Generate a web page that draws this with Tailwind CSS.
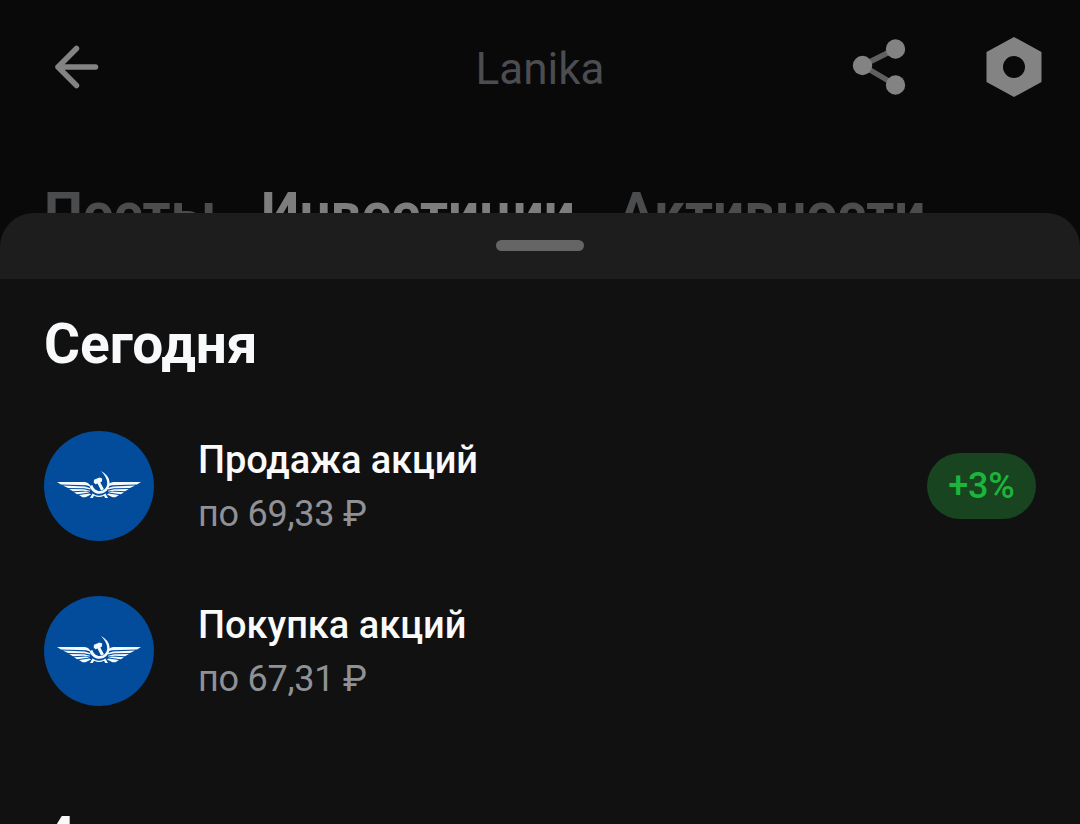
<!DOCTYPE html>
<html lang="ru">
<head>
  <meta charset="UTF-8" />
  <meta name="viewport" content="width=device-width, initial-scale=1.0" />
  <title>Lanika</title>
  <script src="https://cdn.jsdelivr.net/npm/@tailwindcss/browser@4"></script>
</head>
<body class="bg-[#090909] font-['Roboto',sans-serif] text-white">
  <div class="relative h-[824px] w-full overflow-hidden">
    <!-- Header -->
    <header class="grid h-[134px] grid-cols-3 items-center px-[36px]">
      <svg class="ml-[18px] h-[46px] w-[46px]" viewBox="0 0 46 46" fill="none" stroke="#838383" stroke-width="5.500" stroke-linecap="round" stroke-linejoin="round">
        <path d="M41.500 23H4M22.500 4.500L4 23L22.500 41.500" />
      </svg>
      <h1 class="pt-[4px] text-center text-[44px] leading-[52px] text-[#4b4d50]">Lanika</h1>
      <div class="flex items-center justify-end gap-[78px]">
        <svg class="h-[58px] w-[56px]" viewBox="0 0 56 58">
          <path d="M45.500 11L12.500 27.500L45.500 47" fill="none" stroke="#606060" stroke-width="5.500" />
          <g fill="#838383">
            <circle cx="45.500" cy="11" r="9.700" />
            <circle cx="12.500" cy="27.500" r="9.700" />
            <circle cx="45.500" cy="47" r="9.700" />
          </g>
        </svg>
        <svg class="h-[60px] w-[60px]" viewBox="0 0 60 60">
          <path fill="#838383" fill-rule="evenodd" d="M30 0L57.500 15V45L30 60L2.500 45V15ZM30 19a11 11 0 1 0 0 22a11 11 0 1 0 0-22Z" />
        </svg>
      </div>
    </header>

    <!-- Tabs -->
    <nav class="flex pt-[46px] pl-[44px] text-[55px] leading-[66px] font-bold text-[#4a4c4e]">
      <a class="w-[217px]">Посты</a>
      <a class="w-[357px] text-[#7d7d7d]">Инвестиции</a>
      <a>Активности</a>
    </nav>

    <!-- Bottom sheet -->
    <section class="absolute inset-x-0 top-[213px] bottom-0 overflow-hidden rounded-t-[34px] bg-[#111111]">
      <div class="flex h-[66px] justify-center bg-[#1d1d1e] pt-[27px]">
        <div class="h-[11px] w-[88px] rounded-full bg-[#656565]"></div>
      </div>

      <div class="px-[44px] pt-[33px]">
        <h2 class="text-[55px] leading-[64px] font-bold text-[#f8f9fa]">Сегодня</h2>

        <div class="mt-[55px] flex h-[110px] items-center">
          <svg class="h-[110px] w-[110px] shrink-0" viewBox="0 0 110 110">
            <circle cx="55" cy="55" r="55" fill="#034b9b" />
            <g id="emblem" fill="#f3faff">
              <g id="wing">
                <path d="M13 51H41Q44.500 51.500 46 54L46.500 55.500L42 54.200L17 53.400Z" />
                <path d="M19 54.500L41 55.500L46.500 57.300V58.500L40 57.200L24 57Z" />
                <path d="M25 58L40 58.200L46 59.700V60.600L39 59.800L29 60.300Z" />
                <path d="M30 61.200L42 60.600L45.500 61.600L37 62.800L33 63.200Z" />
                <path d="M35 64L45.500 62.400L47 63.600L41.500 66.300H38.500Z" />
              </g>
              <use href="#wing" transform="matrix(-1 0 0 1 110 0)" />
              <path d="M57 40Q65.700 44.500 65.700 52C65.700 58 61 62.800 55.500 62.800C50.500 62.800 46.800 59.500 45.600 55L48.300 54C49.500 57.800 52.500 60 55.500 60C60 60 63.200 56.500 63.200 52Q63.200 46.500 57 40Z" />
              <path d="M50 48.800L55.500 46.500L58.200 47.600L57.900 50.500L56.300 51.500L60 58.300L57 59.500L53.500 52.500L51.500 53.200L49.700 51.500Z" />
              <path d="M48.500 62.500Q55 67 61.500 62.500L64 67H61.200L60 64.800Q55 67.200 50 64.800L48.800 67H46Z" />
            </g>
          </svg>
          <div class="ml-[44px] grow pt-[2px]">
            <div class="text-[38px] leading-[54px] font-medium tracking-[-0.1px] text-[#fafafa]">Продажа акций</div>
            <div class="text-[36px] leading-[54px] tracking-[-0.25px] text-[#8f9196]">по 69,33 ₽</div>
          </div>
          <div class="flex h-[66px] w-[109px] items-center justify-center rounded-full bg-[#184420] text-[36px] font-medium tracking-[-0.2px] text-[#1cb53c]">+3%</div>
        </div>

        <div class="mt-[55px] flex h-[110px] items-center">
          <svg class="h-[110px] w-[110px] shrink-0" viewBox="0 0 110 110">
            <circle cx="55" cy="55" r="55" fill="#034b9b" />
            <use href="#emblem" />
          </svg>
          <div class="ml-[44px] grow pt-[2px]">
            <div class="text-[38px] leading-[54px] font-medium text-[#fafafa]">Покупка акций</div>
            <div class="text-[36px] leading-[54px] tracking-[-0.25px] text-[#8f9196]">по 67,31 ₽</div>
          </div>
        </div>

        <h2 class="mt-[99px] text-[55px] leading-[64px] font-bold text-[#f8f9fa]">4</h2>
      </div>
    </section>
  </div>
</body>
</html>
